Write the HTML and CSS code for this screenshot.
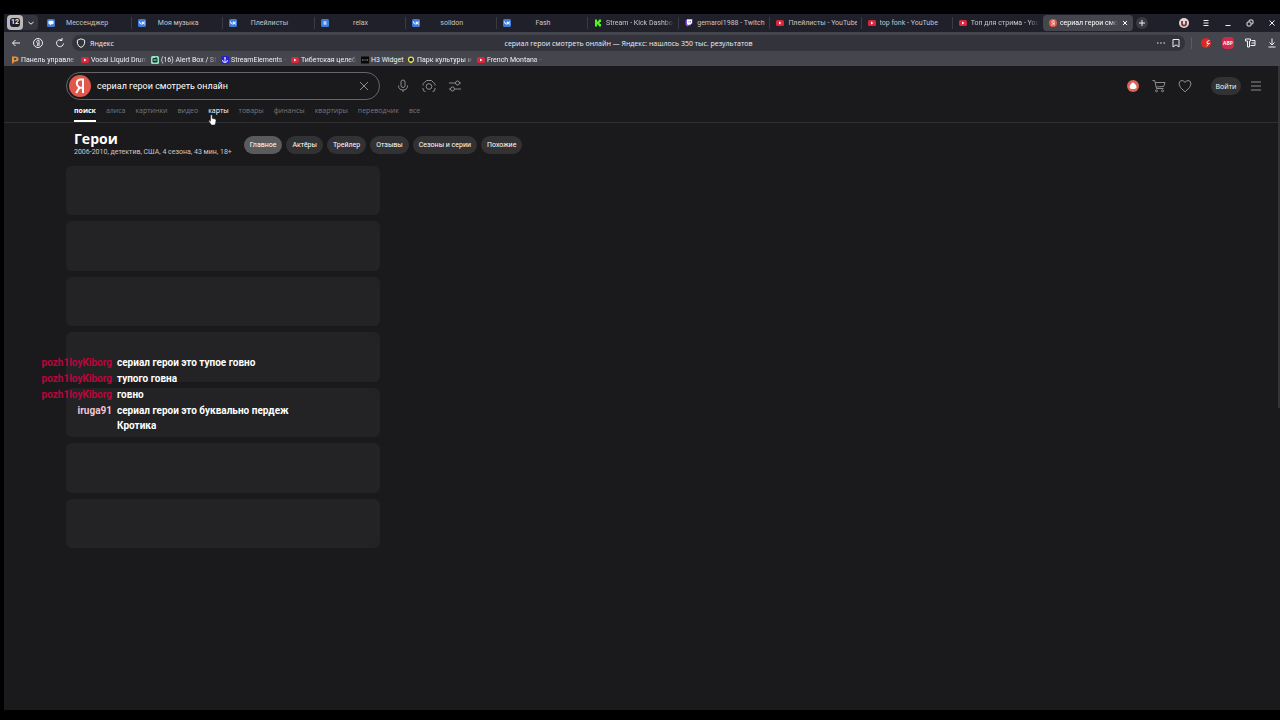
FILE: index.html
```html
<!DOCTYPE html>
<html lang="ru">
<head>
  <meta charset="UTF-8">
  <meta name="viewport" content="width=device-width, initial-scale=1">
  <title>сериал герои смотреть онлайн — Яндекс: нашлось 350 тыс. результатов</title>
  <link rel="stylesheet" href="styles.css">
</head>
<body>
  <!-- shared icons -->
  <svg class="sprite" aria-hidden="true">
    <symbol id="vk" viewBox="0 0 16 16"><rect width="16" height="16" rx="3" fill="#3d7bdc"/><path d="M2 5h2q.5 4.500 3.500 5V5h2v2.200Q11 7 12 5h2q-.5 2-2 3 1.700 1 2.300 3H12q-.8-1.700-2.500-2V11H8Q2.500 11 2 5z" fill="#fff"/></symbol>
    <symbol id="yt" viewBox="0 0 16 16"><rect y="2" width="16" height="12" rx="3" fill="#d9263c"/><path d="M6 5l5 3-5 3z" fill="#fff"/></symbol>
    <symbol id="ya" viewBox="0 0 22 22"><circle cx="11" cy="11" r="11" fill="#e2594b"/><path d="M14 18V4.500h-2.200c-2.500 0-4 1.600-4 3.900 0 2 1 3 2.700 4.200L7.200 18M14 12.700h-3" fill="none" stroke="#fff" stroke-width="2"/></symbol>
  </svg>

  <header class="browser">
    <div class="tab-strip">
      <div class="tab-count">
        <button class="count" aria-label="12 вкладок"><span>12</span></button>
        <button class="count-more" aria-label="Список вкладок"><svg viewBox="0 0 8 8"><path d="M1.500 3L4 5.200 6.500 3"/></svg></button>
      </div>
      <nav class="tabs">
        <a href="#" class="tab centered"><svg class="fav" viewBox="0 0 16 16"><rect width="16" height="16" rx="3" fill="#3d7bdc"/><path d="M3 5q0-1.500 1.500-1.500h7q1.500 0 1.500 1.500v4q0 1.500-1.500 1.500H8.500L6 13v-2.500H4.500Q3 10.500 3 9z" fill="#fff"/></svg><span>Мессенджер</span></a>
        <a href="#" class="tab centered"><svg class="fav"><use href="#vk"/></svg><span>Моя музыка</span></a>
        <a href="#" class="tab centered"><svg class="fav"><use href="#vk"/></svg><span>Плейлисты</span></a>
        <a href="#" class="tab centered"><svg class="fav" viewBox="0 0 16 16"><rect width="16" height="16" rx="3" fill="#3d7bdc"/><path d="M5 4.500h6v7H5z" fill="#b8d2f8"/></svg><span>relax</span></a>
        <a href="#" class="tab centered"><svg class="fav"><use href="#vk"/></svg><span>solldon</span></a>
        <a href="#" class="tab centered"><svg class="fav"><use href="#vk"/></svg><span>Fash</span></a>
        <a href="#" class="tab"><svg class="fav" viewBox="0 0 16 16"><path d="M2 1h4v4h2V3h2V1h4v5h-2v1h-1v2h1v1h2v5h-4v-2H8v-2H6v4H2z" fill="#53f51c"/></svg><span class="fade">Stream - Kick Dashboo</span></a>
        <a href="#" class="tab"><svg class="fav" viewBox="0 0 16 16"><path d="M4 0L1 3v10h3v3l3-3h3l5-5V0z" fill="#7d4be0"/><path d="M4 1h10v7l-3 3H8l-2 2v-2H4z" fill="#fff"/><path d="M8 4v3M11 4v3" stroke="#7d4be0" stroke-width="1.500"/></svg><span>gemaroi1988 - Twitch</span></a>
        <a href="#" class="tab"><svg class="fav"><use href="#yt"/></svg><span>Плейлисты - YouTube</span></a>
        <a href="#" class="tab"><svg class="fav"><use href="#yt"/></svg><span>top fonk - YouTube</span></a>
        <a href="#" class="tab"><svg class="fav"><use href="#yt"/></svg><span class="fade">Топ для стрима - YouT</span></a>
        <a href="#" class="tab active"><svg class="fav"><use href="#ya"/></svg><span class="fade">сериал герои смотр</span><svg class="close" viewBox="0 0 8 8"><path d="M2 2l4 4M6 2L2 6"/></svg></a>
      </nav>
      <button class="new-tab" aria-label="Новая вкладка"><svg viewBox="0 0 8 8"><path d="M4 1v6M1 4h6"/></svg></button>
      <div class="window-buttons">
        <button aria-label="Профиль"><svg viewBox="0 0 12 12"><circle cx="6" cy="6" r="5" fill="#e8d4cf" stroke="none"/><path d="M4 4v3q0 1.500 2 1.500T8 7V4" stroke="#6d3b3e" stroke-width="1.800"/></svg></button>
        <button aria-label="Меню"><svg viewBox="0 0 12 12"><path d="M3.500 3.500h5M3.500 6h5M3.500 8.500h5"/></svg></button>
        <button aria-label="Свернуть"><svg viewBox="0 0 12 12"><path d="M3.500 8.500h5"/></svg></button>
        <button aria-label="Развернуть"><svg viewBox="0 0 12 12"><rect x="3" y="5" width="4" height="4" rx="1"/><path d="M5 4.500V4q0-1 1-1h2q1 0 1 1v2q0 1-1 1h-.5"/></svg></button>
        <button aria-label="Закрыть"><svg viewBox="0 0 12 12"><path d="M3.500 3.500l5 5M8.500 3.500l-5 5"/></svg></button>
      </div>
    </div>

    <div class="toolbar">
      <div class="nav-buttons">
        <button aria-label="Назад"><svg viewBox="0 0 12 12"><path d="M10 6H2.500M5.500 3l-3 3 3 3"/></svg></button>
        <button aria-label="Яндекс"><svg viewBox="0 0 12 12"><circle cx="6" cy="6" r="4.500"/><path d="M7 9V3.200h-.8c-2 0-2 3 0 3L5 9"/></svg></button>
        <button aria-label="Обновить"><svg viewBox="0 0 12 12"><path d="M9.500 6.500A3.500 3.500 0 1 1 8 3.300M8 1v2.500H5.800"/></svg></button>
      </div>
      <div class="omnibox">
        <div class="host"><svg class="shield" viewBox="0 0 12 12"><path d="M6 1.800l3.600 1.400v3Q9.300 9 6 10.500 2.700 9 2.400 6.200v-3z"/></svg>Яндекс</div>
        <input type="text" aria-label="Адрес" value="сериал герои смотреть онлайн — Яндекс: нашлось 350 тыс. результатов">
        <div class="omni-actions">
          <button aria-label="Ещё"><svg viewBox="0 0 12 12"><path d="M2 6h1.500M5.200 6h1.500M8.500 6H10"/></svg></button>
          <button aria-label="В закладки"><svg viewBox="0 0 12 12"><path d="M3 2.500h6v7.500L6 7.800 3 10z"/></svg></button>
        </div>
      </div>
      <div class="extensions">
        <button aria-label="Расширение"><svg viewBox="0 0 12 12"><circle cx="6" cy="6" r="5" fill="#d82a25" stroke="none"/><path d="M9.500 3.500L7 4.500v2h3M6.500 9l2-1.500"/></svg></button>
        <button class="abp" aria-label="Adblock Plus">ABP</button>
        <button aria-label="Коллекции"><svg viewBox="0 0 12 12"><path d="M1.500 4V2h5v2h-1v6h-2V4z"/><path d="M7.500 3.500H11v5H6.500M7.500 6H11"/></svg></button>
        <button aria-label="Загрузки"><svg viewBox="0 0 12 12"><path d="M6 1.500V8M3.500 5.500L6 8l2.500-2.500M2.500 10h7"/></svg></button>
      </div>
    </div>

    <nav class="bookmarks">
      <a href="#"><svg class="fav" viewBox="0 0 16 16"><path d="M2 1h7q6 0 6 5t-5 5H7l-3 4H2zM6 4v4h3q2 0 2-2t-2-2z" fill="#e8953a"/></svg><span class="fade">Панель управле</span></a>
      <a href="#"><svg class="fav"><use href="#yt"/></svg><span class="fade">Vocal Liquid Drum</span></a>
      <a href="#"><svg class="fav" viewBox="0 0 16 16"><rect width="16" height="16" rx="3" fill="#8fe6c0"/><path d="M4 5h8v7H4zM10 2v3" fill="#1c4235" stroke="#163a2e" stroke-width="2"/><path d="M5 8h6" stroke="#fff" stroke-width="1.500"/></svg><span class="fade">(16) Alert Box / St</span></a>
      <a href="#"><svg class="fav" viewBox="0 0 16 16"><rect width="16" height="16" rx="3" fill="#2720d4"/><path d="M8 3v9M3 8q0 5 5 5t5-5M6 4h4" fill="none" stroke="#fff" stroke-width="1.800"/></svg><span class="fade">StreamElements -</span></a>
      <a href="#"><svg class="fav"><use href="#yt"/></svg><span class="fade">Тибетская целеб</span></a>
      <a href="#" class="short"><svg class="fav" viewBox="0 0 16 16"><rect y="1" width="16" height="14" fill="#08080a"/><path d="M2 8h3M7 8h2M11 8h3" stroke="#aaa" stroke-width="2"/></svg><span>H3 Widget</span></a>
      <a href="#"><svg class="fav" viewBox="0 0 16 16"><path d="M8 15L4 11.500 8 10l4 1.500z" fill="#d8d84a"/><circle cx="8" cy="7" r="5" fill="#25252a" stroke="#e6e24f" stroke-width="2.500"/></svg><span class="fade">Парк культуры и</span></a>
      <a href="#"><svg class="fav"><use href="#yt"/></svg><span class="fade">French Montana -</span></a>
    </nav>
  </header>

  <main class="page">
    <div class="search-row">
      <form class="search-box" role="search">
        <svg class="logo"><use href="#ya"/></svg>
        <input type="text" aria-label="Запрос" value="сериал герои смотреть онлайн">
        <button type="reset" aria-label="Очистить"><svg viewBox="0 0 14 14"><path d="M3 3l8 8M11 3l-8 8"/></svg></button>
      </form>
      <div class="search-tools">
        <button aria-label="Голосовой поиск"><svg viewBox="0 0 14 14"><rect x="5" y="1" width="4" height="7.500" rx="2"/><path d="M2.500 6.500Q2.500 11 7 11t4.500-4.500M7 11v2"/></svg></button>
        <button aria-label="Поиск по картинке"><svg viewBox="0 0 14 14"><circle cx="7" cy="7.500" r="2.800"/><path d="M1 6.500V5.500Q1 4 2.500 3.700L4.500 1.500h5l2 2.200Q13 4 13 5.500v1M1 9v1q0 2.500 2.500 2.500M13 9v1q0 2.500-2.500 2.500"/></svg></button>
        <button aria-label="Фильтры"><svg viewBox="0 0 14 14"><path d="M1 4h6.500M11.500 4H13M1 10h1.500M6.500 10H13"/><circle cx="9.500" cy="4" r="2"/><circle cx="4.500" cy="10" r="2"/></svg></button>
      </div>
      <div class="user-tools">
        <button aria-label="Алиса"><svg viewBox="0 0 14 14"><circle cx="7" cy="7" r="6" fill="#dc6355" stroke="none"/><path d="M7 3.200Q10.500 6 10.500 8 10.500 10 7 10T3.500 8Q3.500 6 7 3.200z" fill="#fff" stroke="none"/></svg></button>
        <button aria-label="Корзина"><svg viewBox="0 0 14 14"><path d="M.5 1.500h2.200l1.800 8h7M3.200 3.500h9.800l-1.300 4-7.500.5"/><circle cx="4.500" cy="11.800" r="1"/><circle cx="10.500" cy="11.800" r="1"/></svg></button>
        <button aria-label="Избранное"><svg viewBox="0 0 14 14"><path d="M7 12.800Q1 8.500 1 5q0-3.500 3-3.500Q6 1.500 7 3.500q1-2 3-2 3 0 3 3.500 0 3.500-6 7.800z"/></svg></button>
        <button class="login">Войти</button>
        <button aria-label="Меню"><svg viewBox="0 0 14 14"><path d="M2 3h10M2 7h10M2 11h10"/></svg></button>
      </div>
    </div>

    <nav class="services">
      <a href="#" class="current">поиск</a>
      <a href="#">алиса</a>
      <a href="#">картинки</a>
      <a href="#">видео</a>
      <a href="#" class="hovered">карты<svg class="pointer" viewBox="0 0 16 20"><path d="M5 1q2-1 2.500 1v5l5 1.200q2 .6 1.800 2.500l-.8 5-1.500 3.300H6L1.500 12q-.5-2 1.300-1.500L4.500 12V2z" fill="#fff" stroke="#222"/></svg></a>
      <a href="#">товары</a>
      <a href="#">финансы</a>
      <a href="#">квартиры</a>
      <a href="#">переводчик</a>
      <a href="#">все</a>
    </nav>

    <section class="entity">
      <div class="entity-title">
        <h1>Герои</h1>
        <p>2006-2010, детектив, США, 4 сезона, 43 мин, 18+</p>
      </div>
      <div class="chips">
        <button class="selected">Главное</button>
        <button>Актёры</button>
        <button>Трейлер</button>
        <button>Отзывы</button>
        <button>Сезоны и серии</button>
        <button>Похожие</button>
      </div>
    </section>

    <div class="placeholders">
      <div></div><div></div><div></div><div></div><div></div><div></div><div></div>
    </div>
    <div class="scroll-thumb"></div>
  </main>

  <!-- stream chat on top of the page -->
  <dl class="chat">
    <dt>pozh1loyKiborg</dt><dd>сериал герои это тупое говно</dd>
    <dt>pozh1loyKiborg</dt><dd>тупого говна</dd>
    <dt>pozh1loyKiborg</dt><dd>говно</dd>
    <dt class="pink">iruga91</dt><dd>сериал герои это буквально пердеж Кротика</dd>
  </dl>
</body>
</html>
```
FILE: styles.css
```css
:root {
  --strip: #20202a;
  --toolbar: #45454e;
  --field: #33333c;
  --page: #1a1a1c;
  --card: #232325;
  --text: #f0f0f3;
  --ui-font: Roboto, sans-serif;
}
* {
  box-sizing: border-box;
}
body {
  margin: 0;
  padding: 14px 0 10px 4px;
  min-height: 100vh;
  display: flex;
  flex-direction: column;
  position: relative;
  background: #000;
  color: var(--text);
  font-family: "Open Sans", "Noto Sans", sans-serif;
  font-size: 7px;
}
button, input {
  border: 0;
  padding: 0;
  margin: 0;
  background: none;
  color: inherit;
  font: inherit;
  outline: none;
}
button {
  display: flex;
  align-items: center;
  justify-content: center;
  flex: none;
}
a {
  color: inherit;
  text-decoration: none;
}
svg {
  display: block;
  flex: none;
  fill: none;
  stroke: currentColor;
}
symbol, .fav, .logo {
  stroke: none;
}
.sprite {
  position: absolute;
  width: 0;
  height: 0;
}
.fav {
  width: 8px;
  height: 8px;
}
.fade {
  mask-image: linear-gradient(to right, #000 85%, transparent);
}

/* browser tabs */
.tab-strip {
  display: flex;
  height: 18px;
  background: var(--strip);
  font-family: var(--ui-font);
}
.tab-count {
  display: flex;
  width: 31px;
  height: 15px;
  margin: 1px 3px;
  border-radius: 4px;
  background: #35353e;
}
.count {
  width: 16px;
  border-radius: 4px;
  background: #b9b9bd;
}
.count span {
  padding: 0 1px;
  border-radius: 3px;
  background: #1d1d22;
  font-size: 7px;
  line-height: 9px;
  font-weight: 700;
}
.count-more {
  flex: 1;
}
.count-more svg, .new-tab svg, .close {
  width: 8px;
  height: 8px;
}
.tabs {
  display: flex;
  flex: 0 1 1092px;
  min-width: 0;
}
.tab {
  display: flex;
  align-items: center;
  gap: 4px;
  flex: 1;
  min-width: 0;
  padding: 0 4px 0 6px;
  color: #c4c4ca;
}
.tab span, .bookmarks span {
  flex: 1;
  min-width: 0;
  overflow: hidden;
  white-space: nowrap;
}
.tab.centered span {
  text-align: center;
  padding-right: 12px;
}
.tab + .tab:not(.active) {
  border-left: 1px solid #3a3a43;
  border-image: linear-gradient(transparent 20%, #3a3a43 20%, #3a3a43 80%, transparent 80%) 1;
}
.tab.active {
  gap: 3px;
  margin: 1px 0;
  border-radius: 4px;
  background: #45454e;
  color: #fff;
}
.new-tab {
  width: 12px;
  height: 12px;
  margin: 3px;
  border-radius: 50%;
  background: #3a3a43;
}
.window-buttons {
  display: flex;
  margin-left: auto;
  padding-right: 2px;
  gap: 10px;
}
.window-buttons svg, .toolbar svg {
  width: 12px;
  height: 12px;
}

/* address bar */
.toolbar {
  display: flex;
  align-items: center;
  height: 22px;
  background: var(--toolbar);
}
.nav-buttons {
  display: flex;
  gap: 10px;
  padding: 0 6px;
}
.omnibox {
  display: grid;
  grid-template-columns: 1fr 300px 1fr;
  align-items: center;
  flex: 1;
  height: 16px;
  padding: 0 3px;
  border-radius: 8px;
  background: var(--field);
}
.host, .omni-actions {
  display: flex;
  align-items: center;
  gap: 3px;
}
.omni-actions {
  justify-content: flex-end;
}
.omnibox input {
  text-align: center;
}
.extensions {
  display: flex;
  gap: 10px;
  margin-left: 6px;
  padding: 0 2px 0 8px;
  border-left: 1px solid #5b5b64;
}
.extensions .abp {
  width: 12px;
  height: 12px;
  border-radius: 4px;
  background: #cf2a4b;
  font-size: 5px;
  font-weight: 700;
}
.bookmarks {
  display: flex;
  height: 12px;
  padding: 0 7px;
  background: var(--toolbar);
  font-family: var(--ui-font);
}
.bookmarks a {
  display: flex;
  align-items: center;
  gap: 2px;
  width: 70px;
  padding-right: 4px;
}
.bookmarks .short {
  width: 46px;
  padding-right: 0;
}

/* search page */
.page {
  flex: 1;
  position: relative;
  padding-top: 6px;
  background: var(--page);
}
.search-row {
  display: flex;
  align-items: center;
  padding: 0 17px 0 62px;
}
.search-box {
  display: flex;
  align-items: center;
  gap: 6px;
  width: 314px;
  height: 28px;
  padding: 0 8px 0 2px;
  border: 1px solid #66666a;
  border-radius: 14px;
}
.logo {
  width: 22px;
  height: 22px;
}
.search-box input {
  flex: 1;
  min-width: 0;
  color: #fff;
  font-family: var(--ui-font);
  font-size: 9px;
}
.search-row svg {
  color: #8b8b90;
}
.search-row button svg {
  width: 14px;
  height: 14px;
}
.search-tools, .user-tools {
  display: flex;
  align-items: center;
  gap: 12px;
}
.search-tools {
  margin-left: 16px;
}
.user-tools {
  margin-left: auto;
}
.login {
  height: 18px;
  width: 30px;
  margin: 0 -4px 0 7px;
  border-radius: 9px;
  background: #323234;
  color: #fff;
}
.services {
  display: flex;
  gap: 10px;
  padding: 2px 70px 0;
  border-bottom: 1px solid #303032;
  color: #77777b;
}
.services a {
  position: relative;
  line-height: 18px;
  border-bottom: 2px solid transparent;
}
.services .current {
  color: #fff;
  font-weight: 700;
  border-color: #fff;
}
.services .hovered {
  color: #fff;
}
.pointer {
  position: absolute;
  left: 0;
  top: 12px;
  width: 9px;
  height: 12px;
}
.entity {
  display: flex;
  align-items: center;
  gap: 12px;
  height: 43px;
  padding: 0 70px;
}
.entity-title {
  padding-bottom: 3px;
}
h1 {
  margin: 0;
  color: #fff;
  font-size: 14px;
  line-height: 17px;
}
.entity p {
  margin: 0;
  line-height: 10px;
  font-family: var(--ui-font);
  color: #c9c9cc;
}
.chips {
  display: flex;
  gap: 4px;
}
.chips button {
  height: 18px;
  padding: 0 6px;
  border-radius: 9px;
  background: #323234;
  color: #fff;
  font-family: var(--ui-font);
}
.chips .selected {
  background: #5b5b5d;
}
.placeholders {
  display: grid;
  grid-template-rows: repeat(7, 1fr);
  gap: 6px;
  width: 314px;
  min-height: 382px;
  margin-left: 62px;
}
.placeholders div {
  border-radius: 6px;
  background: var(--card);
}
.scroll-thumb {
  position: absolute;
  top: 0;
  right: 0;
  width: 2px;
  height: 342px;
  background: #343437;
}

/* chat overlay */
.chat {
  position: absolute;
  left: 40px;
  top: 355px;
  display: grid;
  grid-template-columns: 72px 180px;
  gap: 1px 5px;
  margin: 0;
  font-family: Roboto, sans-serif;
  font-size: 10px;
  font-weight: 700;
  line-height: 15px;
  color: #fff;
}
.chat dt {
  text-align: right;
  color: #b8063f;
}
.chat dt.pink {
  color: #f3c4d2;
}
.chat dd {
  margin: 0;
}
```
